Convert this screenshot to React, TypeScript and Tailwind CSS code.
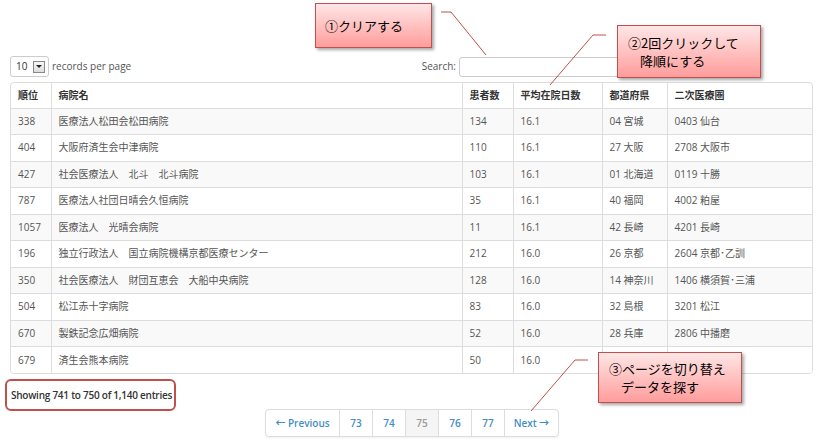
import React from "react"

const rows = [
  ["338", "医療法人松田会松田病院", "134", "16.1", "04 宮城", "0403 仙台"],
  ["404", "大阪府済生会中津病院", "110", "16.1", "27 大阪", "2708 大阪市"],
  ["427", "社会医療法人　北斗　北斗病院", "103", "16.1", "01 北海道", "0119 十勝"],
  ["787", "医療法人社団日晴会久恒病院", "35", "16.1", "40 福岡", "4002 粕屋"],
  ["1057", "医療法人　光晴会病院", "11", "16.1", "42 長崎", "4201 長崎"],
  ["196", "独立行政法人　国立病院機構京都医療センター", "212", "16.0", "26 京都", "2604 京都･乙訓"],
  ["350", "社会医療法人　財団互恵会　大船中央病院", "128", "16.0", "14 神奈川", "1406 横須賀･三浦"],
  ["504", "松江赤十字病院", "83", "16.0", "32 島根", "3201 松江"],
  ["670", "製鉄記念広畑病院", "52", "16.0", "28 兵庫", "2806 中播磨"],
  ["679", "済生会熊本病院", "50", "16.0", "", ""],
]

const headers = ["順位", "病院名", "患者数", "平均在院日数", "都道府県", "二次医療圏"]
const widths = ["w-[40px]", "w-[411px]", "w-[51px]", "w-[89px]", "w-[65px]", ""]

const pages = ["← Previous", "73", "74", "75", "76", "77", "Next →"]

function Callout({ className, children }: { className: string; children: React.ReactNode }) {
  return (
    <div
      className={
        "absolute border border-[#c0504d] bg-gradient-to-b from-[#ffe6e6] to-[#ff9c9c] text-[13px] leading-[18px] text-black shadow-[2px_2px_3px_rgba(0,0,0,0.35)] " +
        className
      }
      style={{ fontFamily: '"Noto Sans CJK JP", sans-serif' }}
    >
      {children}
    </div>
  )
}

export default function App() {
  return (
    <div
      className="relative w-[820px] h-[442px] overflow-hidden bg-white text-[#333]"
      style={{ fontFamily: '"Open Sans", "Noto Sans CJK JP", sans-serif' }}
    >
      <div className="pl-[10px] pr-[7px] pt-[56px]">
        <div className="flex h-[21px] items-center justify-between">
          <div className="flex items-center text-[10px] text-[#555]">
            <div className="flex h-[21px] w-[39px] items-center rounded-[3px] border border-[#ccc] pl-[5px] text-[10px] text-[#333]">
              <span>10</span>
              <span className="ml-[6px] flex h-[12px] w-[12px] items-center justify-center border border-[#888] bg-gradient-to-b from-[#f6f6f6] to-[#dcdcdc]">
                <span className="block h-0 w-0 border-x-[3px] border-t-[3px] border-x-transparent border-t-[#222]" />
              </span>
            </div>
            <span className="ml-[3px]">records per page</span>
          </div>
          <div className="flex items-center text-[10px] text-[#555]">
            <span className="mr-[3px]">Search:</span>
            <div className="h-[20px] w-[200px] rounded-[3px] border border-[#ccc] bg-white" />
            <div className="w-[154px]" />
          </div>
        </div>

        <div className="mt-[5px] overflow-hidden rounded-[4px] border border-[#ddd]">
          <table className="w-full table-fixed border-collapse text-[10px]">
            <thead>
              <tr className="h-[25px]">
                {headers.map((h, i) => (
                  <th
                    key={h}
                    className={
                      widths[i] +
                      " px-[7px] text-left font-bold text-[#333] " +
                      (i > 0 ? "border-l border-[#ddd]" : "")
                    }
                  >
                    {h}
                  </th>
                ))}
              </tr>
            </thead>
            <tbody>
              {rows.map((r, ri) => (
                <tr key={r[0]} className={"h-[26.5px] " + (ri % 2 === 0 ? "bg-[#f9f9f9]" : "bg-white")}>
                  {r.map((c, ci) => (
                    <td
                      key={ci}
                      className={
                        "border-t border-[#ddd] px-[7px] text-[#555] whitespace-nowrap " +
                        (ci > 0 ? "border-l" : "")
                      }
                    >
                      {c}
                    </td>
                  ))}
                </tr>
              ))}
            </tbody>
          </table>
        </div>

        <div className="-ml-[5px] mt-[5px] flex h-[32px] w-[171px] items-center whitespace-nowrap rounded-[6px] border-2 border-[#c0504d] pl-[4px] text-[10px] font-semibold tracking-[-0.25px] text-[#333]">
          Showing 741 to 750 of 1,140 entries
        </div>

        <div className="-mt-[2px] ml-[255px] flex h-[28px] w-[294px] overflow-hidden rounded-[4px] border border-[#ddd] text-[10px] font-semibold shadow-[0_1px_2px_rgba(0,0,0,0.06)]">
          {pages.map((p, i) => (
            <div
              key={p}
              className={
                "flex items-center justify-center " +
                (i > 0 ? "border-l border-[#ddd] " : "") +
                (p === "75" ? "bg-[#f5f5f5] text-[#999] " : "text-[#3f8ec6] ") +
                (i === 0 ? "w-[73px]" : i === 6 ? "flex-1" : "w-[33px]")
              }
            >
              {p}
            </div>
          ))}
        </div>
      </div>

      <svg className="pointer-events-none absolute left-0 top-0" width="820" height="442">
        <polyline points="441,12 451,12 486,55" fill="none" stroke="#c0504d" strokeWidth="1" />
        <polyline points="606,35 593,35 550,85" fill="none" stroke="#c0504d" strokeWidth="1" />
        <polyline points="588,360 575,360 531,411" fill="none" stroke="#c0504d" strokeWidth="1" />
      </svg>

      <Callout className="left-[315px] top-[3px] flex h-[45px] w-[117px] items-center pl-[9px]">①クリアする</Callout>
      <Callout className="left-[617px] top-[25px] h-[53px] w-[144px] pl-[10px] pt-[8px]">
        <div>②2回クリックして</div>
        <div className="pl-[12px]">降順にする</div>
      </Callout>
      <Callout className="left-[598px] top-[352px] h-[51px] w-[144px] pl-[10px] pt-[7px]">
        <div>③ページを切り替え</div>
        <div className="pl-[12px]">データを探す</div>
      </Callout>
    </div>
  )
}
